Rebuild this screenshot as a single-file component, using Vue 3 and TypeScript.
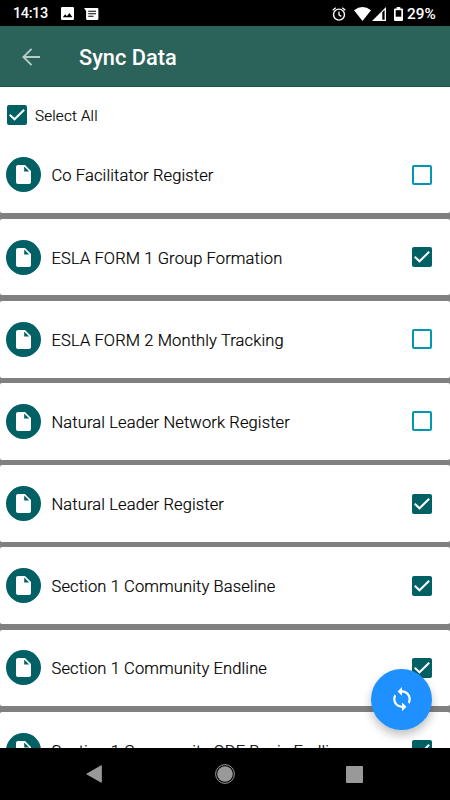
<script setup lang="ts">
import { reactive, ref } from 'vue'

interface FormItem {
  name: string
  selected: boolean
}

const forms = reactive<FormItem[]>([
  { name: 'Co Facilitator Register', selected: false },
  { name: 'ESLA FORM 1 Group Formation', selected: true },
  { name: 'ESLA FORM 2 Monthly Tracking', selected: false },
  { name: 'Natural Leader Network Register', selected: false },
  { name: 'Natural Leader Register', selected: true },
  { name: 'Section 1 Community Baseline', selected: true },
  { name: 'Section 1 Community Endline', selected: true },
  { name: 'Section 1 Community ODF Basic Endline', selected: true },
])
const all = ref(true)

function toggleAll() {
  all.value = !all.value
  forms.forEach((f) => (f.selected = all.value))
}
</script>

<template>
  <div class="screen">
    <div class="status">
      <span class="time">14:13</span>
      <svg class="s-image" viewBox="0 0 13 13" width="13" height="13">
        <rect width="13" height="13" rx="1.3" fill="#fff" />
        <path d="M1.8 10.3 4.2 7.3 5.9 9.2 8.4 6 11.4 10.3Z" fill="#000" />
      </svg>
      <svg class="s-msg" viewBox="0 0 15 12" width="15" height="12">
        <path d="M0 0H13.2Q14.4 0 14.4 1.2V10.8Q14.4 12 13.2 12H3.3Q2.1 12 2.1 10.8V3Z" fill="#fff" />
        <path d="M4.3 3.2H12M4.3 5.7H12M4.3 8.2H9.5" stroke="#000" stroke-width="1.1" />
      </svg>
      <span class="grow"></span>
      <svg class="s-alarm" viewBox="0 0 14 14" width="14" height="14" fill="none" stroke="#fff">
        <circle cx="7" cy="7.6" r="5.5" stroke-width="1.4" />
        <path d="M7 4.5V7.9L9.3 9.4M.7 3.3 3.7.8M13.3 3.3 10.3.8" stroke-width="1.3" />
      </svg>
      <svg class="s-wifi" viewBox="0 0 17 14" width="17" height="14">
        <path d="M0 3.3Q8.5-3.3 17 3.3L8.5 14Z" fill="#fff" />
      </svg>
      <svg class="s-cell" viewBox="0 0 14 14" width="14" height="14">
        <path d="M0 14 14 0V14Z" fill="#fff" />
        <path d="M10.3 5.3 12.6 3V12.8H10.3Z" fill="#000" />
      </svg>
      <svg class="s-batt" viewBox="0 0 9 14" width="9" height="14">
        <path d="M2.7 0H6.3V1.5H8Q9 1.5 9 2.5V13Q9 14 8 14H1Q0 14 0 13V2.5Q0 1.5 1 1.5H2.7Z" fill="#fff" />
        <rect x="1.7" y="3.2" width="5.6" height="6.5" fill="#000" />
      </svg>
      <span class="pct">29%</span>
    </div>

    <header class="bar">
      <svg class="back" viewBox="0 0 18 18" width="18" height="18" fill="none" stroke="#b9cdc8" stroke-width="1.9">
        <path d="M18 9H1.5M9.6.8 1.4 9 9.6 17.2" />
      </svg>
      <h1>Sync Data</h1>
    </header>

    <main class="content">
      <div class="select-all" @click="toggleAll">
        <span class="box" :class="{ on: all }">
          <svg v-if="all" viewBox="0 0 20 20"><path d="M2.7 9.8 7.5 14.3 17.2 4.8" /></svg>
        </span>
        <span class="all-label">Select All</span>
      </div>

      <div class="list">
        <div v-for="form in forms" :key="form.name" class="row" @click="form.selected = !form.selected">
          <span class="avatar">
            <svg viewBox="0 0 15 19" width="15" height="19">
              <path d="M2 0H9L15 6V17Q15 19 13 19H2Q0 19 0 17V2Q0 0 2 0Z" fill="#fff" />
              <path d="M8.2 1.5V6.5H13.2Z" fill="#006064" />
            </svg>
          </span>
          <span class="name">{{ form.name }}</span>
          <span class="box" :class="{ on: form.selected }">
            <svg v-if="form.selected" viewBox="0 0 20 20"><path d="M2.7 9.8 7.5 14.3 17.2 4.8" /></svg>
          </span>
        </div>
      </div>
    </main>

    <button class="fab" aria-label="Sync">
      <svg viewBox="2 1 20 22" width="22" height="24.2">
        <path
          d="M12 4V1L8 5l4 4V6c3.310 0 6 2.690 6 6 0 1.010-.25 1.970-.7 2.800l1.460 1.460C19.540 15.030 20 13.570 20 12c0-4.420-3.580-8-8-8zm0 14c-3.310 0-6-2.690-6-6 0-1.010.25-1.970.7-2.800L5.240 7.740C4.460 8.970 4 10.430 4 12c0 4.420 3.580 8 8 8v3l4-4-4-4v3z"
          fill="#fff"
        />
      </svg>
    </button>

    <nav class="nav">
      <svg viewBox="0 0 16 18" width="16" height="18">
        <path d="M15.3.7V17.3L.8 9Z" fill="#999" stroke="#999" stroke-linejoin="round" />
      </svg>
      <svg class="home" viewBox="0 0 20 20" width="20" height="20">
        <circle cx="10" cy="10" r="9.4" fill="none" stroke="#999" />
        <circle cx="10" cy="10" r="7.8" fill="#999" />
      </svg>
      <svg viewBox="0 0 17 17" width="17" height="17">
        <rect width="17" height="17" rx="1" fill="#999" />
      </svg>
    </nav>
  </div>
</template>

<style>
body {
  margin: 0;
  overflow: hidden;
}
</style>

<style scoped>
.screen {
  position: relative;
  display: flex;
  flex-direction: column;
  width: 450px;
  height: 800px;
  overflow: hidden;
  background: #fff;
  font-family: Roboto, sans-serif;
  color: #000;
}
svg {
  display: block;
  flex: none;
}
.status {
  flex: none;
  display: flex;
  align-items: center;
  box-sizing: border-box;
  height: 26px;
  padding: 1px 13px 0;
  background: #000;
  color: #fff;
}
.time,
.pct {
  font: 500 14.5px/24px Roboto, sans-serif;
  white-space: nowrap;
}
.time {
  width: 34px;
  margin-top: 1px;
  letter-spacing: -0.4px;
}
.pct {
  width: 30px;
  margin-left: 4px;
  font-size: 15.3px;
}
.s-image {
  margin-left: 14px;
}
.s-msg {
  margin-left: 10px;
}
.grow {
  flex: 1;
}
.s-alarm {
  margin-right: 8px;
}
.s-cell {
  margin-left: 1px;
}
.s-batt {
  margin-left: 8px;
}
.bar {
  flex: none;
  display: flex;
  align-items: center;
  box-sizing: border-box;
  height: 61px;
  padding: 1px 0 0 22px;
  background: #2b6259;
  border-bottom: 1px solid #14584c;
  color: #fff;
}
.bar h1 {
  margin: 3px 0 0 39px;
  font-size: 21.8px;
  line-height: 30px;
  font-weight: 500;
}
.content {
  flex: 1;
  min-height: 0;
  overflow: hidden;
}
.select-all {
  display: flex;
  align-items: center;
  box-sizing: border-box;
  height: 55px;
  padding-left: 7.4px;
}
.all-label {
  margin: 2px 0 0 7.6px;
  font-size: 15.2px;
  font-weight: 300;
  letter-spacing: 0.2px;
  -webkit-text-stroke: 0.2px #000;
}
.list {
  display: flex;
  flex-direction: column;
  gap: 5.5px;
  background: #808080;
  margin-top: -5.5px;
}
.row {
  flex: none;
  display: flex;
  align-items: center;
  box-sizing: border-box;
  height: 76.7px;
  padding: 0 18.3px 0 5.5px;
  border-radius: 2px;
  background: #fff;
}
.row:first-child {
  border-radius: 0 0 2px 2px;
}
.avatar {
  flex: none;
  display: flex;
  align-items: center;
  justify-content: center;
  width: 35px;
  height: 35px;
  border-radius: 50%;
  background: #006064;
}
.name {
  flex: 1;
  margin: 2px 0 0 11px;
  font-size: 16.5px;
  font-weight: 300;
  letter-spacing: 0.12px;
  -webkit-text-stroke: 0.2px #000;
  white-space: nowrap;
}
.box {
  flex: none;
  box-sizing: border-box;
  width: 20px;
  height: 20px;
  border: 2px solid #0097b0;
  border-radius: 2px;
}
.box.on {
  border: 0;
  background: #006064;
}
.box path {
  fill: none;
  stroke: #fff;
  stroke-width: 2;
}
.fab {
  position: absolute;
  left: 371px;
  top: 669px;
  display: flex;
  align-items: center;
  justify-content: center;
  width: 61px;
  height: 61px;
  padding: 0;
  border: 0;
  border-radius: 50%;
  background: #1e90ff;
  box-shadow: 0 5px 10px rgba(0, 0, 0, 0.25);
}
.nav {
  position: relative;
  flex: none;
  display: flex;
  align-items: center;
  justify-content: space-between;
  box-sizing: border-box;
  height: 52px;
  padding: 0 87px 0 86px;
  background: #000;
}
.home {
  margin-left: 2px;
}
</style>
